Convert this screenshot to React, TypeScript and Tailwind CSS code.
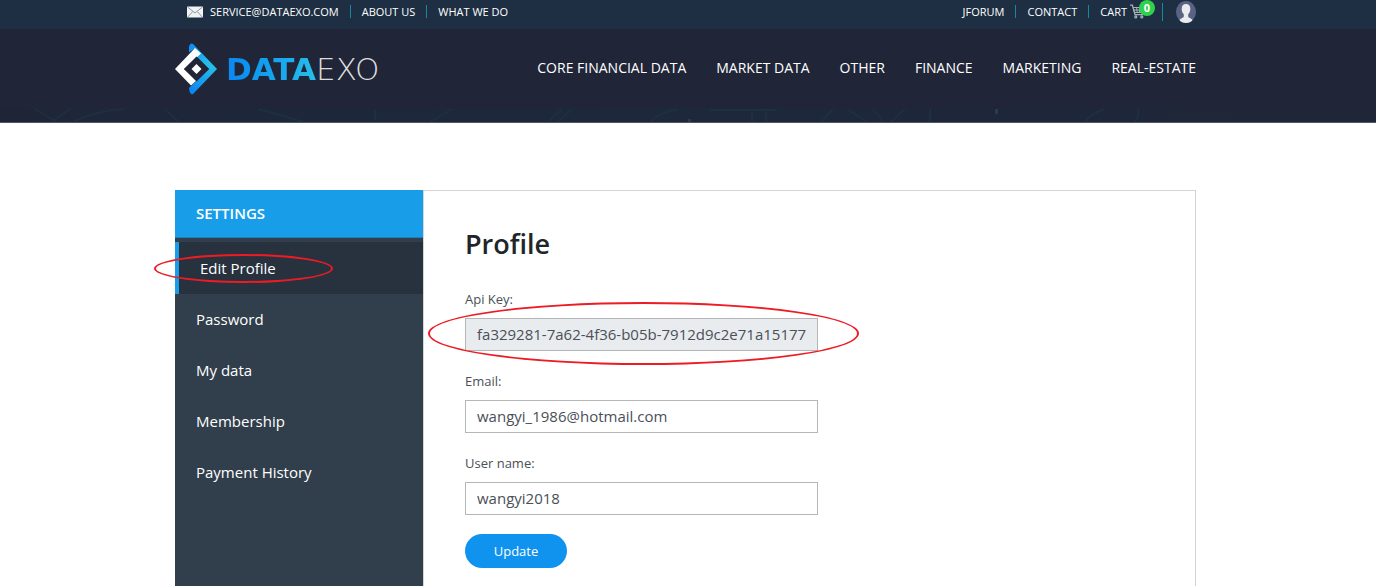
import type { ReactNode } from "react";

const mainNav = ["CORE FINANCIAL DATA", "MARKET DATA", "OTHER", "FINANCE", "MARKETING", "REAL-ESTATE"];
const settingsNav = ["Password", "My data", "Membership", "Payment History"];

function Container({ children }: { children: ReactNode }) {
  return <div className="mx-auto w-full max-w-[1021px]">{children}</div>;
}

function Divider() {
  return <span aria-hidden="true" className="h-[13px] w-px bg-[#16899b]" />;
}

function EnvelopeIcon() {
  return (
    <svg width="16" height="12" viewBox="0 0 16 12" aria-hidden="true">
      <rect x="0" y="0.5" width="16" height="11" rx="0.8" fill="#f2f3f4" />
      <path d="M0.8 1.2 8 7l7.2-5.8M0.8 11 5.8 5.4M15.2 11l-5-5.6" fill="none" stroke="#8d99a3" strokeWidth="1" />
    </svg>
  );
}

function CartIcon() {
  return (
    <svg width="16" height="15" viewBox="0 0 16 15" aria-hidden="true" fill="none" stroke="#a9b1b8">
      <path d="M0 1.2h2.4L5 10.6h8" strokeWidth="1.3" />
      <path d="M3.2 3.5h11.6l-1.4 5H4.6zM4 6h10.4M6.6 3.5l.6 5M9.4 3.5v5M12.2 3.5l-.6 5" strokeWidth="1" />
      <circle cx="5.8" cy="12.9" r="1" strokeWidth="1.2" />
      <circle cx="11.8" cy="12.9" r="1" strokeWidth="1.2" />
    </svg>
  );
}

function Avatar() {
  return (
    <svg width="20" height="22" viewBox="0 0 20 22" aria-hidden="true">
      <defs>
        <clipPath id="avatar-clip">
          <ellipse cx="10" cy="11" rx="10" ry="11" />
        </clipPath>
      </defs>
      <g clipPath="url(#avatar-clip)">
        <rect width="20" height="22" fill="#5b6384" />
        <path
          d="M10 3c-2.800 0-4.300 1.900-4.300 4.700 0 2.300.8 4.400 2.100 5.600v2.200c-.3 1.500-3.400 1.700-4.300 3.500L5 22h10l1.500-3c-.9-1.800-4-2-4.300-3.500v-2.200c1.300-1.200 2.100-3.300 2.100-5.600C14.300 4.900 12.800 3 10 3z"
          fill="#e9ebee"
        />
      </g>
    </svg>
  );
}

function LogoMark() {
  return (
    <svg width="42" height="52" viewBox="0 0 42 52" aria-hidden="true">
      <defs>
        <linearGradient id="mark-top" x1="0" y1="0" x2="1" y2="1">
          <stop offset="0" stopColor="#0c86f2" />
          <stop offset="0.7" stopColor="#27bdea" />
        </linearGradient>
        <linearGradient id="mark-bottom" x1="0" y1="1" x2="1" y2="0">
          <stop offset="0.1" stopColor="#0c86f2" />
          <stop offset="1" stopColor="#27bdea" />
        </linearGradient>
      </defs>
      <path d="M14 4Q14.300.5 17 .5 18.500.5 20 3L42 26H34L21 13 19 6 14 9.500z" fill="url(#mark-top)" />
      <path d="M42 26 18 51Q16 52 14.500 48.500L14 45 34 26z" fill="url(#mark-bottom)" />
      <path d="M20 5 0 26 16 42.500 21.500 37.500 9 26 26 10.500z" fill="#fff" />
      <path d="M21.500 13.500 34 26 21.500 38.500 9 26z" fill="#202538" />
      <path d="M21.500 21 26.500 26l-5 5-5-5z" fill="#fff" />
    </svg>
  );
}

function HeaderPattern() {
  return (
    <svg className="block h-[15px] w-full" viewBox="0 0 1376 15" preserveAspectRatio="none" aria-hidden="true">
      <defs>
        <linearGradient id="band">
          <stop offset="0" stopColor="#1f2537" />
          <stop offset="0.1" stopColor="#1e273a" />
          <stop offset="0.5" stopColor="#1d283b" />
          <stop offset="1" stopColor="#1f2638" />
        </linearGradient>
      </defs>
      <rect width="1376" height="15" fill="url(#band)" />
      <g fill="none" stroke="#1e2f40" strokeWidth="2">
        <path d="M35 1l20 12M70 1l-18 13M75 13Q100 2 125 1M165 1l14 13M258 1q20 5 45 13M375 2v10M430 14l22-13" />
        <path d="M548 14l14-13M572 1l-14 13M650 14q10-10 28-13M710 2h67M766 2v12M752 2v12M833 1l-12 13M847 1l20 13" />
        <path d="M873 1l10 13M905 1l-14 13M930 1v13M1085 14q8-10 20-13M1138 1q2 8-4 13" />
      </g>
      <g fill="#2a3b4c">
        <rect x="995" y="1" width="3" height="5" />
        <rect x="688" y="11" width="3" height="3" />
      </g>
      <rect y="14" width="1376" height="1" fill="#4e5565" />
    </svg>
  );
}

function Field({ id, label, value, disabled, children }: { id: string; label: string; value: string; disabled?: boolean; children?: ReactNode }) {
  return (
    <div>
      <label htmlFor={id} className="block text-[13px] leading-5 text-[#495057]">
        {label}
      </label>
      <div className="relative mt-[9px] max-w-[353px]">
        <input
          id={id}
          type="text"
          defaultValue={value}
          disabled={disabled}
          className="block h-[33px] w-full border border-[#b4b6b8] bg-white px-[11px] pb-0.5 text-[15px] text-[#495057] disabled:bg-[#e9ecef]"
        />
        {children}
      </div>
    </div>
  );
}

export default function App() {
  return (
    <div className="flex min-h-screen flex-col bg-white font-['Open_Sans',sans-serif] text-white">
      <header className="bg-[#202538]">
        <div className="bg-[#1e2f43] pr-[5px]">
          <Container>
            <div className="flex h-[29px] items-start justify-between text-[11px] leading-[23px]">
              <div className="flex items-center gap-[11px] pl-3">
                <a href="#service" className="flex items-center gap-[7px]">
                  <EnvelopeIcon />
                  SERVICE@DATAEXO.COM
                </a>
                <Divider />
                <a href="#about">ABOUT US</a>
                <Divider />
                <a href="#what">WHAT WE DO</a>
              </div>
              <div className="flex items-center gap-[11px]">
                <a href="#jforum">JFORUM</a>
                <Divider />
                <a href="#contact">CONTACT</a>
                <Divider />
                <a href="#cart" className="relative flex items-center gap-[3px] pr-[9px]">
                  CART
                  <CartIcon />
                  <span className="absolute top-0 right-0 flex size-4 items-center justify-center rounded-full bg-[#2fd04e] text-[11px] leading-4 font-bold">
                    0
                  </span>
                </a>
                <span aria-hidden="true" className="-ml-1 h-[18px] w-px bg-[#16899b]" />
                <a href="#account" aria-label="Account" className="pl-0.5">
                  <Avatar />
                </a>
              </div>
            </div>
          </Container>
        </div>
        <div className="pr-[5px]">
          <Container>
            <div className="flex h-[79px] items-center justify-between">
              <a href="#home" className="flex items-center gap-[9px] font-['DejaVu_Sans',sans-serif] text-[31px] leading-8">
                <LogoMark />
                <span>
                  <span className="bg-linear-to-r from-[#0c86f2] to-[#27bdea] bg-clip-text font-bold text-transparent">DATA</span>
                  <span className="font-['DejaVu_Sans_Light','DejaVu_Sans',sans-serif] font-extralight text-[#dcdcdc]">EXO</span>
                </span>
              </a>
              <nav className="flex gap-[30px] pb-0.5 text-sm leading-5">
                {mainNav.map((item) => (
                  <a key={item} href="#nav">
                    {item}
                  </a>
                ))}
              </nav>
            </div>
          </Container>
        </div>
        <HeaderPattern />
      </header>

      <main className="flex grow flex-col pt-[67px] pr-[5px]">
        <div className="mx-auto flex w-full max-w-[1021px] grow">
          <aside className="w-[248px] shrink-0 bg-[#313e4b] text-[15px]">
            <h2 className="mb-1 border-b border-[#1f7fb8] bg-[#189de8] px-[21px] leading-[47px] font-semibold">SETTINGS</h2>
            <nav>
              <a href="#profile" className="relative block border-l-4 border-[#189de8] bg-[#27323e] px-[21px] leading-[52px]">
                Edit Profile
                <span
                  aria-hidden="true"
                  className="absolute top-3 -left-[25px] h-[29px] w-[179px] rounded-[50%] border-2 border-[#ed1c24]"
                />
              </a>
              {settingsNav.map((item) => (
                <a key={item} href="#settings" className="block px-[21px] leading-[51px]">
                  {item}
                </a>
              ))}
            </nav>
          </aside>
          <section className="min-w-0 grow border border-b-0 border-[#d5d5d5] px-[41px] pt-9">
            <h1 className="text-[27px] leading-[34px] font-semibold text-[#212529]">Profile</h1>
            <form className="mt-7">
              <div className="flex flex-col gap-5">
                <Field id="api-key" label="Api Key:" value="fa329281-7a62-4f36-b05b-7912d9c2e71a151777" disabled>
                  <span
                    aria-hidden="true"
                    className="pointer-events-none absolute -top-4 -right-[41px] -bottom-[14px] -left-[37px] rounded-[50%] border-2 border-[#ed1c24]"
                  />
                </Field>
                <Field id="email" label="Email:" value="wangyi_1986@hotmail.com" />
                <Field id="user-name" label="User name:" value="wangyi2018" />
              </div>
              <button type="button" className="mt-[19px] h-[34px] w-[102px] rounded-full bg-[#0f93ee] text-[13px] leading-5 text-white">
                Update
              </button>
            </form>
          </section>
        </div>
      </main>
    </div>
  );
}
